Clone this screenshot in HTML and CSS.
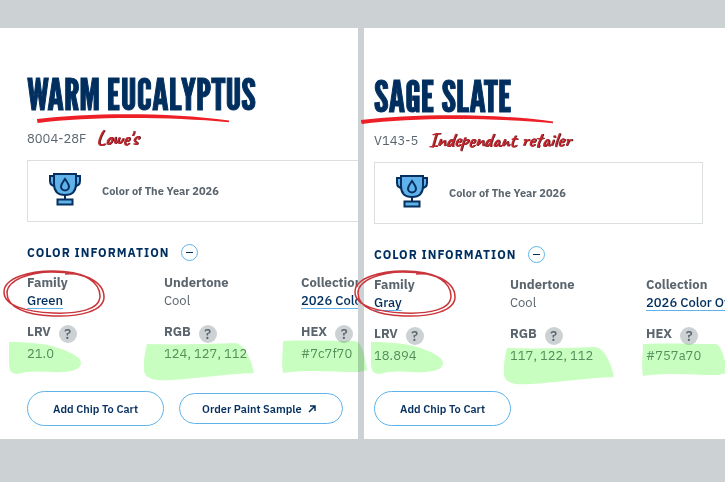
FILE: index.html
```
<!DOCTYPE html>
<html lang="en">
<head>
    <meta charset="UTF-8">
    <meta name="viewport" content="width=device-width, initial-scale=1.0">
    <title>Warm Eucalyptus / Sage Slate</title>
    <link rel="stylesheet" href="styles.css">
</head>
<body>
    <!-- shared shapes -->
    <svg class="sprite" aria-hidden="true">
        <symbol id="trophy" viewBox="0 0 34 34">
            <g fill="#5fb3ea" stroke="#06305f" stroke-width="2">
                <path d="M6 4H2v5c0 4 2 5 6 5M28 4h4v5c0 4-2 5-6 5"/>
                <path d="M6 2h22v10c0 7-4 11-11 11S6 19 6 12z"/>
                <path d="M17 23v5"/>
                <path d="M9.500 27.500h15v5h-15z"/>
                <path d="M17 7c-2 3-4 5-4 7.500a4 4 0 0 0 8 0C21 12 19 10 17 7z"/>
            </g>
        </symbol>
        <symbol id="swoosh" viewBox="0 0 192 9">
            <path d="M0 5C50-1 130-2 192 6.500V8.200C130 2.500 50 2.500 1 9Q0 8.500 0 5z" fill="#ee2027"/>
        </symbol>
        <symbol id="oval" viewBox="0 0 102 48">
            <g fill="none" stroke="#c9353a" stroke-width="1.500">
                <path d="M62 4C82 2 97 13 97 26c0 14-23 18-47 17C24 42 1 36 1 22 1 8 26 1 50 1c29 0 51 10 51 26 0 14-24 20-51 19C22 45 4 37 4 23 4 10 27 2 49 2c15 0 30 2 38 7"/>
            </g>
        </symbol>
        <symbol id="mark-lrv" viewBox="0 0 72 32">
            <path d="M0 0c22 0 41 2 55 8 10 4 17 8 17 13 0 8-15 10-30 9-14-1-25-1-34 2C1 32 0 27 0 20z" fill="#c8ffc0"/>
        </symbol>
        <symbol id="mark-rgb" viewBox="0 0 110 38">
            <path d="M3 1c30 1 60 0 88-1 8 0 16 14 19 30-28 1-55 5-82 7-16 1-26 0-28-9C-1 19 1 9 3 1z" fill="#c8ffc0"/>
        </symbol>
        <symbol id="mark-hex" viewBox="0 0 85 33">
            <path d="M1 1c25-1 47 0 72 0 5 0 9 9 12 28 0 2-4 2-10 3-25 0-50-3-74 1C-1 22 1 12 1 1z" fill="#c8ffc0"/>
        </symbol>
    </svg>

    <main class="compare">
        <section class="panel panel-left">
            <h1>WARM EUCALYPTUS
                <svg class="swoosh" aria-hidden="true"><use href="#swoosh"/></svg>
            </h1>
            <p class="code">8004-28F <span class="note">Lowe's</span></p>
            <div class="award">
                <svg class="trophy" aria-hidden="true"><use href="#trophy"/></svg>
                <span>Color of The Year 2026</span>
            </div>
            <h2>COLOR INFORMATION
                <button class="toggle" aria-label="Collapse"></button>
            </h2>
            <dl class="info">
                <div class="family">
                    <dt>Family</dt>
                    <dd><a href="#">Green</a></dd>
                    <svg class="oval" aria-hidden="true"><use href="#oval"/></svg>
                </div>
                <div>
                    <dt>Undertone</dt>
                    <dd>Cool</dd>
                </div>
                <div class="clip">
                    <dt>Collection</dt>
                    <dd><a href="#">2026 Color</a></dd>
                </div>
                <div class="value">
                    <dt>LRV <button class="help">?</button></dt>
                    <dd>21.0 <svg class="mark lrv" aria-hidden="true"><use href="#mark-lrv"/></svg></dd>
                </div>
                <div class="value">
                    <dt>RGB <button class="help">?</button></dt>
                    <dd>124, 127, 112 <svg class="mark rgb" aria-hidden="true"><use href="#mark-rgb"/></svg></dd>
                </div>
                <div class="value">
                    <dt>HEX <button class="help">?</button></dt>
                    <dd>#7c7f70 <svg class="mark hex" aria-hidden="true"><use href="#mark-hex"/></svg></dd>
                </div>
            </dl>
            <div class="actions">
                <button class="btn">Add Chip To Cart</button>
                <button class="btn btn-order">Order Paint Sample
                    <svg class="arrow" viewBox="0 0 8 8" aria-hidden="true"><path d="M1 7l6-6M2 1h5v5" fill="none" stroke="#06305f" stroke-width="1.500"/></svg>
                </button>
            </div>
        </section>

        <section class="panel panel-right">
            <h1>SAGE SLATE
                <svg class="swoosh" aria-hidden="true"><use href="#swoosh"/></svg>
            </h1>
            <p class="code">V143-5 <span class="note">Independant retailer</span></p>
            <div class="award">
                <svg class="trophy" aria-hidden="true"><use href="#trophy"/></svg>
                <span>Color of The Year 2026</span>
            </div>
            <h2>COLOR INFORMATION
                <button class="toggle" aria-label="Collapse"></button>
            </h2>
            <dl class="info">
                <div class="family">
                    <dt>Family</dt>
                    <dd><a href="#">Gray</a></dd>
                    <svg class="oval" aria-hidden="true"><use href="#oval"/></svg>
                </div>
                <div>
                    <dt>Undertone</dt>
                    <dd>Cool</dd>
                </div>
                <div class="clip">
                    <dt>Collection</dt>
                    <dd><a href="#">2026 Color Of</a></dd>
                </div>
                <div class="value">
                    <dt>LRV <button class="help">?</button></dt>
                    <dd>18.894 <svg class="mark lrv" aria-hidden="true"><use href="#mark-lrv"/></svg></dd>
                </div>
                <div class="value">
                    <dt>RGB <button class="help">?</button></dt>
                    <dd>117, 122, 112 <svg class="mark rgb" aria-hidden="true"><use href="#mark-rgb"/></svg></dd>
                </div>
                <div class="value">
                    <dt>HEX <button class="help">?</button></dt>
                    <dd>#757a70 <svg class="mark hex" aria-hidden="true"><use href="#mark-hex"/></svg></dd>
                </div>
            </dl>
            <div class="actions">
                <button class="btn">Add Chip To Cart</button>
            </div>
        </section>
    </main>
</body>
</html>
```
FILE: styles.css
```
*{
    box-sizing: border-box;
}
body{
    margin: 0;
    padding: 28px 0;
    background-color: #ccd1d4;
    color: #5b656e;
    font-family: "IBM Plex Sans", Roboto, "Liberation Sans", sans-serif;
    font-size: 13px;
    overflow-x: hidden;
}
h1, h2, p, dl, dd{
    margin: 0;
}
button{
    font-family: inherit;
    padding: 0;
    cursor: pointer;
}
.sprite{
    position: absolute;
    width: 0;
    height: 0;
}
.compare{
    display: grid;
    grid-template-columns: minmax(0, 358fr) minmax(0, 361fr);
    gap: 6px;
}
.panel{
    display: flex;
    flex-direction: column;
    background-color: white;
    padding: 40px 0 13px 27px;
    white-space: nowrap;
}
.panel-right{
    padding: 42px 0 13px 10px;
}

h1{
    position: relative;
    color: #002f5f;
    font-family: "League Gothic", "Roboto Condensed", "Liberation Sans Narrow", "Liberation Sans", sans-serif;
    font-size: 43px;
    line-height: 52px;
    font-weight: normal;
    -webkit-text-stroke: 1px #002f5f;
}
.swoosh{
    position: absolute;
    left: 10px;
    top: 46px;
    width: 192px;
    height: 9px;
}
.panel-right .swoosh{
    left: -13px;
    top: 45px;
}
.code{
    display: flex;
    align-items: center;
    gap: 10px;
    height: 20px;
    margin-top: 8px;
}
.note{
    color: #c4262d;
    font-family: Caveat, "Patrick Hand", "Liberation Sans Narrow", "Liberation Sans", cursive;
    font-size: 20px;
    font-weight: bold;
    text-shadow: 1px 0 #5a2226;
}
.award{
    display: flex;
    align-items: center;
    gap: 20px;
    height: 62px;
    margin-top: 12px;
    padding-left: 20px;
    border: 1px solid #dcdfe0;
    border-right: 0;
    font-size: 11px;
    font-weight: bold;
}
.panel-right .award{
    margin-right: 22px;
    border-right: 1px solid #dcdfe0;
}
.trophy{
    width: 34px;
    height: 34px;
    margin-bottom: 4px;
}

h2{
    display: flex;
    align-items: center;
    gap: 12px;
    height: 20px;
    margin-top: 20px;
    color: #002f5f;
    font-size: 12px;
    letter-spacing: 1px;
}
.toggle{
    display: flex;
    align-items: center;
    justify-content: center;
    width: 17px;
    height: 17px;
    border: 1px solid #5fb3ea;
    border-radius: 50%;
    background: none;
}
.toggle::before{
    content: "";
    width: 7px;
    height: 1px;
    background-color: #002f5f;
}

.info{
    display: grid;
    grid-template-columns: 137px 137px minmax(0, 1fr);
    row-gap: 11px;
    margin-top: 12px;
    line-height: 18px;
}
.panel-right .info{
    grid-template-columns: 136px 136px minmax(0, 1fr);
}
.family{
    position: relative;
}
.clip{
    overflow: hidden;
}
dt{
    font-weight: bold;
}
.info a{
    color: #002f5f;
    font-weight: 500;
    text-decoration: underline #5fb3ea;
    text-decoration-skip-ink: none;
    text-underline-offset: 3px;
}
.value dt{
    display: flex;
    align-items: center;
    gap: 8px;
    height: 22px;
}
.value dd{
    position: relative;
    margin-top: 2px;
    color: #6c8f7a;
}
.help{
    width: 18px;
    height: 18px;
    margin-top: 4px;
    border: 0;
    border-radius: 50%;
    background-color: #ccd1d4;
    color: #5b656e;
    font-size: 14px;
    font-weight: 500;
    line-height: 18px;
}

/* pen and highlighter marks */
.oval{
    position: absolute;
    left: -24px;
    top: -4px;
    width: 102px;
    height: 48px;
}
.panel-right .oval{
    left: -20px;
    top: -6px;
}
.mark{
    position: absolute;
    mix-blend-mode: multiply;
}
.lrv{
    left: -18px;
    top: -3px;
    width: 72px;
    height: 32px;
}
.rgb{
    left: -20px;
    top: -2px;
    width: 110px;
    height: 38px;
}
.hex{
    left: -19px;
    top: -5px;
    width: 85px;
    height: 33px;
}
.panel-right .lrv{
    left: -3px;
    top: -5px;
}
.panel-right .rgb{
    left: -6px;
    top: 0;
}
.panel-right .hex{
    left: -4px;
    top: -4px;
}

.actions{
    display: flex;
    align-items: center;
    gap: 15px;
    margin-top: auto;
    padding-top: 26px;
}
.btn{
    height: 35px;
    padding: 0 25px;
    border: 1px solid #5fb3ea;
    border-radius: 18px;
    background-color: white;
    color: #06305f;
    font-size: 11px;
    font-weight: 600;
}
.btn-order{
    height: 31px;
    padding: 0 26px 0 22px;
}
.arrow{
    width: 8px;
    height: 8px;
    margin-left: 4px;
}
```
